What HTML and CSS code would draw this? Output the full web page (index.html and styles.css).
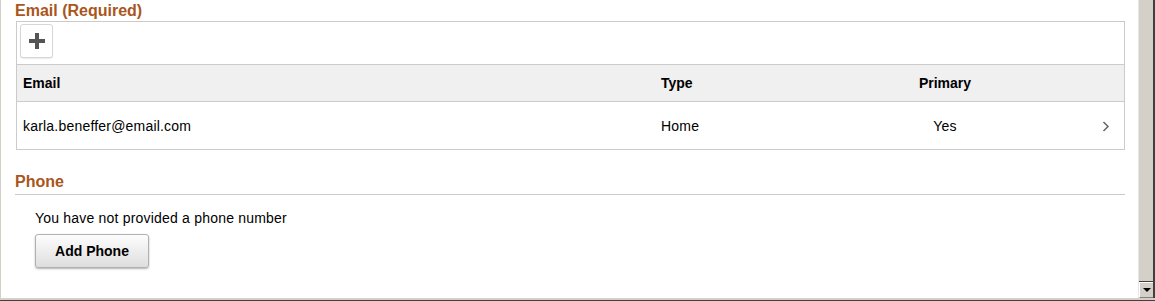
FILE: index.html
```html
<!DOCTYPE html>
<html lang="en">

<head>
    <meta charset="UTF-8">
    <meta name="viewport" content="width=device-width, initial-scale=1.0">
    <title>Contact Details</title>
    <link rel="stylesheet" href="styles.css">
</head>

<body>
    <div class="window">
        <div class="page">
            <h2 class="section-title">Email (Required)</h2>
            <div class="grid-box">
                <div class="grid-toolbar">
                    <button class="add-row" title="Add Email">
                        <span class="plus"></span>
                    </button>
                </div>
                <div class="grid-row grid-head">
                    <div class="col-email">Email</div>
                    <div class="col-type">Type</div>
                    <div class="col-primary">Primary</div>
                    <div class="col-go"></div>
                </div>
                <div class="grid-row">
                    <div class="col-email">karla.beneffer@email.com</div>
                    <div class="col-type">Home</div>
                    <div class="col-primary">Yes</div>
                    <div class="col-go">
                        <svg width="8" height="11" viewBox="0 0 8 11">
                            <path d="M1.5 1 L6 5.5 L1.5 10" fill="none" stroke="#666" stroke-width="1.5" />
                        </svg>
                    </div>
                </div>
            </div>

            <h2 class="section-title phone-title">Phone</h2>
            <div class="phone-body">
                <p class="empty-note">You have not provided a phone number</p>
                <button class="btn">Add Phone</button>
            </div>
        </div>

        <div class="scrollbar">
            <div class="scroll-track"></div>
            <div class="scroll-down"><span class="arrow"></span></div>
        </div>
    </div>
</body>

</html>
```

FILE: styles.css
```css
html,
body {
    margin: 0;
    padding: 0;
    height: 100%;
}

body {
    font-family: "Liberation Sans", Arial, sans-serif;
    font-size: 14px;
    color: #000;
    background-color: #fff;
}

.window {
    display: flex;
    height: 298px;
    border-left: 1px solid #d4d0c8;
    border-bottom: 2px solid #d4d0c8;
    box-shadow: 0 1px 0 #404040;
}

.page {
    flex: 1;
    padding: 2px 13px 0 14px;
}

.section-title {
    margin: 0 0 1px 0;
    font-size: 16px;
    line-height: 18px;
    font-weight: bold;
    color: #a9561c;
}

/* grid */
.grid-box {
    margin-left: 1px;
    border: 1px solid #cbcbcb;
}

.grid-toolbar {
    height: 40px;
    border-bottom: 1px solid #cbcbcb;
}

.add-row {
    display: flex;
    align-items: center;
    justify-content: center;
    width: 33px;
    height: 34px;
    margin: 2px 0 0 3px;
    padding: 0;
    background: #fff;
    border: 1px solid #d6d6d6;
    border-radius: 3px;
    box-shadow: 0 1px 1px rgba(0, 0, 0, 0.08);
}

.plus {
    position: relative;
    width: 16px;
    height: 16px;
}

.plus::before,
.plus::after {
    content: "";
    position: absolute;
    background-color: #555;
}

.plus::before {
    left: 0;
    top: 6px;
    width: 16px;
    height: 4px;
}

.plus::after {
    left: 6px;
    top: 0;
    width: 4px;
    height: 16px;
}

.grid-row {
    display: grid;
    grid-template-columns: 639px 209px 160px 1fr;
    align-items: center;
    height: 47px;
    letter-spacing: 0.2px;
}

.grid-head {
    height: 36px;
    background-color: #f0f0f0;
    border-bottom: 1px solid #cbcbcb;
    font-weight: bold;
    letter-spacing: 0;
}

.col-email {
    padding-left: 6px;
}

.col-type {
    padding-left: 5px;
}

.col-primary {
    text-align: center;
}

.col-go {
    display: flex;
    justify-content: flex-end;
    padding-right: 14px;
    padding-top: 2px;
}

/* phone */
.phone-title {
    margin: 23px 0 0 0;
    padding-bottom: 3px;
    border-bottom: 1px solid #cbcbcb;
}

.phone-body {
    padding: 15px 0 0 20px;
}

.empty-note {
    margin: 0;
    line-height: 16px;
    letter-spacing: 0.2px;
}

.btn {
    margin-top: 8px;
    width: 114px;
    height: 34px;
    font-family: "Liberation Sans", Arial, sans-serif;
    font-size: 14px;
    font-weight: bold;
    color: #000;
    background: linear-gradient(#fdfdfd, #dedede);
    border: 1px solid #b0b0b0;
    border-radius: 3px;
    box-shadow: 0 1px 2px rgba(0, 0, 0, 0.3);
}

/* old style scrollbar */
.scrollbar {
    display: flex;
    flex-direction: column;
    width: 14px;
    border-left: 1px solid #e6e6e6;
    border-right: 2px solid #404040;
    background-color: #d4d0c8;
}

.scroll-track {
    flex: 1;
    border-bottom: 1px solid #404040;
}

.scroll-down {
    display: flex;
    align-items: center;
    justify-content: center;
    height: 14px;
    border-top: 1px solid #fff;
    border-left: 1px solid #fff;
    border-bottom: 1px solid #808080;
}

.arrow {
    width: 0;
    height: 0;
    border-left: 4px solid transparent;
    border-right: 4px solid transparent;
    border-top: 4px solid #000;
}
```
